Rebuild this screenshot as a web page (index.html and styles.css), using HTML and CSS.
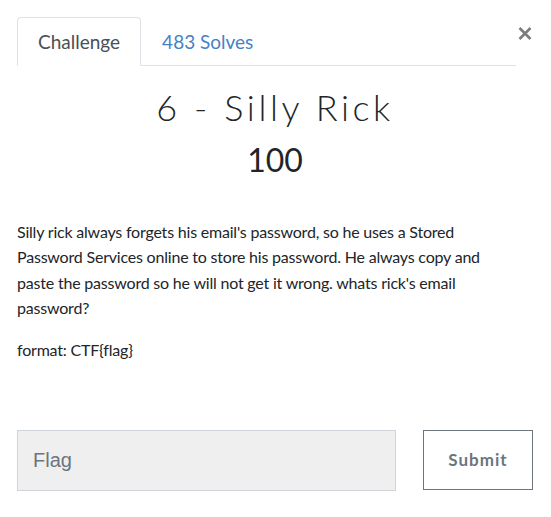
FILE: index.html
```html
<!DOCTYPE html>
<html lang="en">
<head>
    <meta charset="UTF-8">
    <meta name="viewport" content="width=device-width, initial-scale=1.0">
    <title>6 - Silly Rick</title>
    <link rel="stylesheet" href="styles.css">
</head>
<body>
    <div class="modal">
        <button class="close" aria-label="Close">
            <svg width="14" height="13" viewBox="0 0 14 13">
                <path d="M1.5 1 L12.5 12 M12.5 1 L1.5 12" stroke="#7d7d7d" stroke-width="2.6" fill="none"/>
            </svg>
        </button>

        <ul class="nav-tabs">
            <li class="tab active">Challenge</li>
            <li class="tab">483 Solves</li>
        </ul>

        <h3 class="challenge-name">6 - Silly Rick</h3>
        <h4 class="challenge-value">100</h4>

        <div class="challenge-desc">
            <p>Silly rick always forgets his email's password, so he uses a Stored Password Services online to store his password. He always copy and paste the password so he will not get it wrong. whats rick's email password?</p>
            <p>format: CTF{flag}</p>
        </div>

        <div class="submit-row">
            <input type="text" class="flag-input" placeholder="Flag">
            <button class="btn-submit">Submit</button>
        </div>
    </div>
</body>
</html>
```

FILE: styles.css
```css
body {
    margin: 0;
    font-family: 'Lato', 'Liberation Sans', sans-serif;
    color: #212529;
    background: #fff;
}
.modal {
    position: relative;
    padding: 17px 18px 0 17px;
}
.close {
    position: absolute;
    top: 27px;
    right: 19px;
    display: flex;
    background: none;
    border: none;
    padding: 0;
    cursor: pointer;
}
.nav-tabs {
    display: flex;
    list-style: none;
    margin: 0 17px 0 0;
    padding: 0;
    border-bottom: 1px solid #dee2e6;
}
.tab {
    padding: 10px 20px;
    margin-bottom: -1px;
    font-size: 19px;
    line-height: 27px;
    color: #4582c4;
    border: 1px solid transparent;
    border-radius: 4px 4px 0 0;
}
.tab.active {
    color: #495057;
    background: #fff;
    border-color: #dee2e6 #dee2e6 #fff;
}
.challenge-name {
    margin: 20px 0 0;
    text-align: center;
    font-size: 36px;
    font-weight: 300;
    line-height: 1.2;
    letter-spacing: 3.6px;
}
.challenge-value {
    margin: 12px 0 0;
    text-align: center;
    font-size: 32px;
    font-weight: 400;
    line-height: 1.2;
}
.challenge-desc {
    max-width: 490px;
    margin-top: 39px;
    font-size: 16px;
    line-height: 1.6;
    letter-spacing: -0.2px;
}
.challenge-desc p {
    margin: 0 0 16px;
}
.submit-row {
    display: grid;
    grid-template-columns: 379px 110px;
    justify-content: space-between;
    margin-top: 67px;
}
.flag-input {
    box-sizing: border-box;
    height: 61px;
    padding: 0 15px;
    font-family: 'Liberation Sans', sans-serif;
    font-size: 20px;
    color: #495057;
    background: #efefef;
    border: 1px solid #ced4da;
    border-radius: 0;
}
.flag-input::placeholder {
    color: #6c757d;
}
.btn-submit {
    height: 60px;
    padding: 0;
    font-family: 'Lato', sans-serif;
    font-size: 17px;
    font-weight: bold;
    letter-spacing: 1px;
    color: #6c757d;
    background: #fff;
    border: 1px solid #6c757d;
    border-radius: 0;
    cursor: pointer;
}
```
